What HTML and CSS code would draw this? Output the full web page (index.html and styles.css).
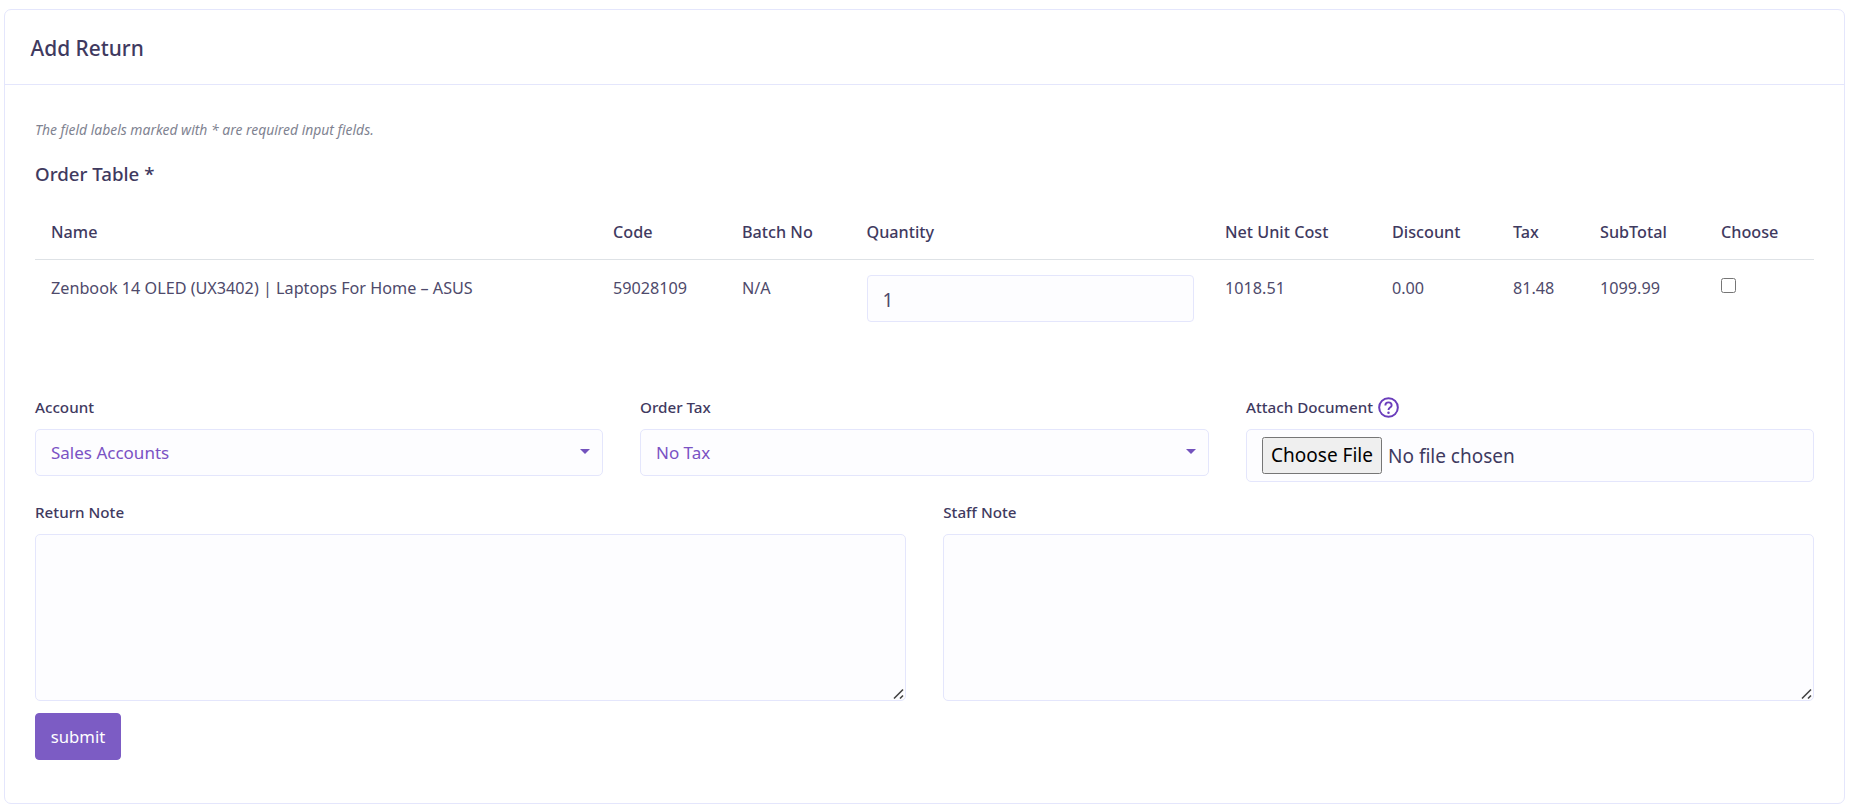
FILE: index.html
```html
<!DOCTYPE html>
<html lang="en">
<head>
<meta charset="utf-8">
<title>Add Return</title>
<link rel="stylesheet" href="styles.css">
</head>
<body>
<section class="card">
  <header class="card-header"><h1 class="card-title">Add Return</h1></header>
  <form class="card-body">
    <p class="hint">The field labels marked with * are required input fields.</p>
    <h2 class="table-title">Order Table *</h2>
    <table class="order-table">
      <colgroup>
        <col class="c-name"><col class="c-code"><col class="c-batch"><col class="c-qty"><col class="c-net"><col class="c-disc"><col class="c-tax"><col class="c-sub"><col class="c-choose">
      </colgroup>
      <thead>
        <tr><th>Name</th><th>Code</th><th>Batch No</th><th>Quantity</th><th>Net Unit Cost</th><th>Discount</th><th>Tax</th><th>SubTotal</th><th>Choose</th></tr>
      </thead>
      <tbody>
        <tr>
          <td>Zenbook 14 OLED (UX3402) | Laptops For Home – ASUS</td>
          <td>59028109</td>
          <td>N/A</td>
          <td><input class="qty" type="text" value="1"></td>
          <td>1018.51</td>
          <td>0.00</td>
          <td>81.48</td>
          <td>1099.99</td>
          <td><input class="choose" type="checkbox"></td>
        </tr>
      </tbody>
    </table>
    <div class="row-three">
      <div class="field">
        <label class="label">Account</label>
        <button type="button" class="select"><span>Sales Accounts</span><i class="caret"></i></button>
      </div>
      <div class="field">
        <label class="label">Order Tax</label>
        <button type="button" class="select"><span>No Tax</span><i class="caret"></i></button>
      </div>
      <div class="field">
        <label class="label">Attach Document
          <svg class="help" viewBox="0 0 20 20" width="21" height="21" aria-hidden="true">
            <circle cx="10" cy="10" r="8.9" fill="none" stroke="#6a3dbb" stroke-width="1.9"/>
            <path d="M7 8c0-1.8 1.3-2.9 3-2.9s3 1.1 3 2.7c0 2.3-3 2.3-3 4.5" fill="none" stroke="#6a3dbb" stroke-width="1.8"/>
            <circle cx="10" cy="15" r="1.2" fill="#6a3dbb"/>
          </svg>
        </label>
        <div class="file-box"><input class="file" type="file"></div>
      </div>
    </div>
    <div class="row-two">
      <div class="field">
        <label class="label">Return Note</label>
        <textarea class="note"></textarea>
      </div>
      <div class="field">
        <label class="label">Staff Note</label>
        <textarea class="note"></textarea>
      </div>
    </div>
    <button type="button" class="submit">submit</button>
  </form>
</section>
</body>
</html>
```

FILE: styles.css
```css
* { box-sizing: border-box; }
html, body { margin: 0; background: #fff; }
body {
  padding: 9px 11px 4px 4px;
  height: 807px;
  overflow: hidden;
  font-family: "Noto Sans", "Open Sans", sans-serif;
  font-size: 16.2px;
  color: #4e4a6b;
}
.card {
  height: 795px;
  background: #fff;
  border: 1px solid #e4e6fc;
  border-radius: 7px;
}
.card-header {
  height: 75px;
  padding: 2px 25.5px 0;
  display: flex;
  align-items: center;
  border-bottom: 1px solid #e4e6fc;
}
.card-title {
  margin: 0;
  font-size: 20.9px;
  font-weight: 500;
  color: #3f3a5f;
}
.card-body { padding: 35px 30px 0; }
.hint {
  margin: 0;
  font-size: 13.9px;
  line-height: 20px;
  font-style: italic;
  color: #7f8391;
}
.table-title {
  margin: 21px 0 0;
  font-size: 18.7px;
  line-height: 26px;
  font-weight: 500;
  color: #3f3a5f;
}
.order-table {
  width: 1779px;
  margin-top: 25px;
  table-layout: fixed;
  border-collapse: collapse;
}
.c-name { width: 562px; }
.c-code { width: 129px; }
.c-batch { width: 124.5px; }
.c-qty { width: 358.5px; }
.c-net { width: 167px; }
.c-disc { width: 121px; }
.c-tax { width: 87px; }
.c-sub { width: 121px; }
.c-choose { width: 109px; }
.order-table th {
  height: 47px;
  padding: 0 0 7px 16px;
  text-align: left;
  font-weight: 500;
  color: #3f3a5f;
  border-bottom: 1px solid #dee2e6;
}
.order-table td {
  height: 79px;
  padding: 15px 0 0 16px;
  vertical-align: top;
  line-height: 27px;
}
.qty {
  display: block;
  width: 327.5px;
  height: 47px;
  padding: 3px 15px 0;
  background: #fdfdff;
  border: 1px solid #e4e6fc;
  border-radius: 4px;
  font: inherit;
  font-size: 19px;
  color: #4e4a6b;
  outline: none;
}
.choose {
  display: block;
  width: 15px;
  height: 15px;
  margin: 3px 0 0;
}
.row-three {
  display: grid;
  grid-template-columns: 567.5px 568.5px 568px;
  column-gap: 37.5px;
  margin-top: 57.5px;
  width: 1779px;
}
.row-two {
  display: grid;
  grid-template-columns: repeat(2, 870.75px);
  column-gap: 37.5px;
  width: 1779px;
  margin-top: 19px;
}
.field { display: flex; flex-direction: column; align-items: stretch; }
.label {
  display: flex;
  align-items: center;
  gap: 5px;
  height: 24px;
  margin-bottom: 9px;
  padding-bottom: 2px;
  font-size: 15.2px;
  font-weight: 500;
  color: #3f3a5f;
}
.help { flex: none; margin-top: 2px; }
.select {
  display: flex;
  align-items: center;
  justify-content: space-between;
  height: 47px;
  padding: 0 12px 0 15px;
  background: #fdfdff;
  border: 1px solid #e4e6fc;
  border-radius: 5px;
  font: inherit;
  font-size: 17px;
  color: #7a52c4;
  text-align: left;
}
.caret {
  width: 0;
  height: 0;
  margin-top: -2px;
  border-left: 5px solid transparent;
  border-right: 5px solid transparent;
  border-top: 5px solid #7352bd;
}
.file-box {
  height: 53px;
  padding: 7px 15px;
  background: #fdfdff;
  border: 1px solid #e4e6fc;
  border-radius: 5px;
}
.file {
  display: block;
  font-family: "Noto Sans", sans-serif;
  font-size: 19px;
  color: #3f3a5f;
}
.file::file-selector-button {
  height: 37px;
  width: 120px;
  padding: 0;
  margin-right: 6px;
  font-family: "Noto Sans", sans-serif;
  font-size: 19px;
  color: #000;
}
.note {
  display: block;
  width: 100%;
  height: 167px;
  background: #fdfdff;
  border: 1px solid #e4e6fc;
  border-radius: 5px;
  outline: none;
}
.note::-webkit-resizer {
  background: url("data:image/svg+xml,%3Csvg xmlns='http://www.w3.org/2000/svg' width='15' height='15'%3E%3Cpath d='M4 13.5 13 4.5M10 13.5 13 10.5' stroke='%23444' stroke-width='1.6' fill='none'/%3E%3C/svg%3E") no-repeat;
}
.submit {
  display: block;
  width: 86px;
  height: 47px;
  margin-top: 12px;
  background: #7c5cc4;
  border: 1px solid #7c5cc4;
  border-radius: 4px;
  font: inherit;
  font-size: 16.7px;
  color: #fff;
}
```
